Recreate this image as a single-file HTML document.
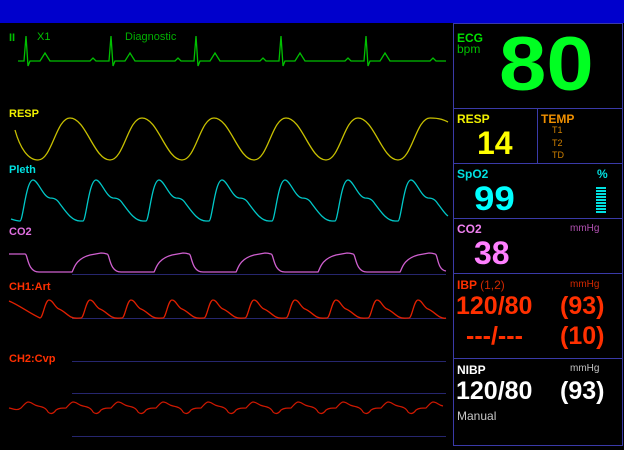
<!DOCTYPE html>
<html><head><meta charset="utf-8"><style>
*{margin:0;padding:0;box-sizing:border-box}
body{width:624px;height:450px;background:#000;position:relative;overflow:hidden;font-family:"Liberation Sans",sans-serif}
.t{position:absolute;white-space:nowrap;line-height:1}
.b{font-weight:bold}
.box{position:absolute;border:1px solid #3a3aa8}
</style></head><body>
<div style="position:absolute;left:0;top:0;width:624px;height:23px;background:#0000cc"></div>

<svg width="624" height="450" style="position:absolute;left:0;top:0" fill="none">
<g stroke="#26266e" stroke-width="1">
<line x1="72" y1="274.5" x2="446" y2="274.5"/>
<line x1="72" y1="318.5" x2="446" y2="318.5"/>
<line x1="72" y1="361.5" x2="446" y2="361.5"/>
<line x1="72" y1="393.5" x2="446" y2="393.5"/>
<line x1="72" y1="436.5" x2="446" y2="436.5"/>
</g>
<path stroke="#00c000" stroke-width="1.3" d="M18,61 h6 l2,-25 l2,30 l2,-5 h10 l5,-8 l5,8 h40 l3,-3 l3,3 h13 l2,-25 l2,30 l2,-5 h10 l5,-8 l5,8 h40 l3,-3 l3,3 h13 l2,-25 l2,30 l2,-5 h10 l5,-8 l5,8 h40 l3,-3 l3,3 h13 l2,-25 l2,30 l2,-5 h10 l5,-8 l5,8 h40 l3,-3 l3,3 h13 l2,-25 l2,30 l2,-5 h10 l5,-8 l5,8 h40 l3,-3 l3,3 h10"/>
<path stroke="#c8c000" stroke-width="1.3" d="M15,130 C20,148 28,160 38,160 C52,160 56,118 70,118 C86,118 94,160 110,160 C124,160 128,118 142,118 C158,118 166,160 182,160 C196,160 200,118 214,118 C230,118 238,160 254,160 C268,160 272,118 286,118 C302,118 310,160 326,160 C340,160 344,118 358,118 C374,118 382,160 398,160 C412,160 416,118 430,118 C440,118 444,120 448,122"/>
<path stroke="#00c8c8" stroke-width="1.3" d="M11,219 c3,1 6,2 9,2 c3,0 6,-41 13,-41 c5,0 10,17 17,18 c6,0 8,3 10,6 c6,8 12,17 20,17 h3 c3,0 6,-41 13,-41 c5,0 10,17 17,18 c6,0 8,3 10,6 c6,8 12,17 20,17 h3 c3,0 6,-41 13,-41 c5,0 10,17 17,18 c6,0 8,3 10,6 c6,8 12,17 20,17 h3 c3,0 6,-41 13,-41 c5,0 10,17 17,18 c6,0 8,3 10,6 c6,8 12,17 20,17 h3 c3,0 6,-41 13,-41 c5,0 10,17 17,18 c6,0 8,3 10,6 c6,8 12,17 20,17 h3 c3,0 6,-41 13,-41 c5,0 10,17 17,18 c6,0 8,3 10,6 c6,8 12,17 20,17 h3 c3,0 6,-41 13,-41 c5,0 10,17 17,18 c6,0 8,3 10,6 c4,5 7,10 10,12"/>
<path stroke="#d060d0" stroke-width="1.3" d="M9,254 H25 c3,0 2,18 14,18 h33 c2,-3 3,-13 18,-17 l11,-2 c2,0 3,0 6,1 c3,0 2,18 14,18 h33 c2,-3 3,-13 18,-17 l11,-2 c2,0 3,0 6,1 c3,0 2,18 14,18 h33 c2,-3 3,-13 18,-17 l11,-2 c2,0 3,0 6,1 c3,0 2,18 14,18 h33 c2,-3 3,-13 18,-17 l11,-2 c2,0 3,0 6,1 c3,0 2,18 14,18 h33 c2,-3 3,-13 18,-17 l11,-2 c2,0 3,0 6,1 c3,0 2,16 11,17"/>
<path stroke="#e02000" stroke-width="1.3" d="M9,301 c10,4 20,12 31,17 c3,0 5,-18 9,-18 c4,0 6,8 10,9 c5,2 8,6 12,8 c4,2 6,1 10,1 c3,0 5,-18 9,-18 c4,0 6,8 10,9 c5,2 8,6 12,8 c4,2 6,1 10,1 c3,0 5,-18 9,-18 c4,0 6,8 10,9 c5,2 8,6 12,8 c4,2 6,1 10,1 c3,0 5,-18 9,-18 c4,0 6,8 10,9 c5,2 8,6 12,8 c4,2 6,1 10,1 c3,0 5,-18 9,-18 c4,0 6,8 10,9 c5,2 8,6 12,8 c4,2 6,1 10,1 c3,0 5,-18 9,-18 c4,0 6,8 10,9 c5,2 8,6 12,8 c4,2 6,1 10,1 c3,0 5,-18 9,-18 c4,0 6,8 10,9 c5,2 8,6 12,8 c4,2 6,1 10,1 c3,0 5,-18 9,-18 c4,0 6,8 10,9 c5,2 8,6 12,8 c4,2 6,1 10,1 c3,0 5,-18 9,-18 c4,0 6,8 10,9 c5,2 8,6 12,8 c4,2 6,1 10,1 c3,0 5,-18 9,-18 c4,0 6,8 10,9 c5,2 8,6 12,8 c4,2 6,1 6,1"/>
<path stroke="#d01800" stroke-width="1.2" d="M9,408 c5,1 8,3 12,0 c3,-3 5,-6 7,-6 c4,0 5,3 10,4 c5,1 8,2 10,6 c3,3 6,1 8,-2 c3,-2 6,-2 10,-2 c3,-3 5,-6 7,-6 c4,0 5,3 10,4 c5,1 8,2 10,6 c3,3 6,1 8,-2 c3,-2 6,-2 10,-2 c3,-3 5,-6 7,-6 c4,0 5,3 10,4 c5,1 8,2 10,6 c3,3 6,1 8,-2 c3,-2 6,-2 10,-2 c3,-3 5,-6 7,-6 c4,0 5,3 10,4 c5,1 8,2 10,6 c3,3 6,1 8,-2 c3,-2 6,-2 10,-2 c3,-3 5,-6 7,-6 c4,0 5,3 10,4 c5,1 8,2 10,6 c3,3 6,1 8,-2 c3,-2 6,-2 10,-2 c3,-3 5,-6 7,-6 c4,0 5,3 10,4 c5,1 8,2 10,6 c3,3 6,1 8,-2 c3,-2 6,-2 10,-2 c3,-3 5,-6 7,-6 c4,0 5,3 10,4 c5,1 8,2 10,6 c3,3 6,1 8,-2 c3,-2 6,-2 10,-2 c3,-3 5,-6 7,-6 c4,0 5,3 10,4 c5,1 8,2 10,6 c3,3 6,1 8,-2 c3,-2 6,-2 10,-2 c3,-3 5,-6 7,-6 c4,0 5,3 10,4 c5,1 8,2 10,6 c3,3 6,1 8,-2 c3,-2 6,-2 10,-2 c3,-3 5,-6 7,-6 c4,0 5,3 10,4"/>
</svg>

<div class="t b" style="left:9px;top:33px;font-size:11px;color:#00c000">II</div>
<div class="t" style="left:37px;top:32px;font-size:11px;color:#00c000">X1</div>
<div class="t" style="left:125px;top:32px;font-size:11px;color:#00b000">Diagnostic</div>
<div class="t b" style="left:9px;top:109px;font-size:11px;color:#f0f000">RESP</div>
<div class="t b" style="left:9px;top:165px;font-size:11px;color:#00e0e0">Pleth</div>
<div class="t b" style="left:9px;top:227px;font-size:11px;color:#e070e0">CO2</div>
<div class="t b" style="left:9px;top:282px;font-size:11px;color:#ff3000">CH1:Art</div>
<div class="t b" style="left:9px;top:354px;font-size:11px;color:#ff3000">CH2:Cvp</div>

<div class="box" style="left:453px;top:23px;width:170px;height:423px"></div>
<div class="box" style="left:453px;top:108px;width:170px;height:1px;border-width:1px 0 0 0"></div>
<div class="box" style="left:537px;top:108px;width:1px;height:55px;border-width:0 0 0 1px"></div>
<div class="box" style="left:453px;top:163px;width:170px;height:1px;border-width:1px 0 0 0"></div>
<div class="box" style="left:453px;top:218px;width:170px;height:1px;border-width:1px 0 0 0"></div>
<div class="box" style="left:453px;top:273px;width:170px;height:1px;border-width:1px 0 0 0"></div>
<div class="box" style="left:453px;top:358px;width:170px;height:1px;border-width:1px 0 0 0"></div>

<div class="t b" style="left:457px;top:32px;font-size:12px;color:#00e000">ECG</div>
<div class="t" style="left:457px;top:43px;font-size:12px;color:#00c000">bpm</div>
<div class="t b" style="left:499px;top:27px;font-size:76px;color:#00ff22;transform:scaleX(1.12);transform-origin:left top">80</div>

<div class="t b" style="left:457px;top:113px;font-size:12px;color:#f0f000">RESP</div>
<div class="t b" style="left:477px;top:127px;font-size:32px;color:#ffff00">14</div>
<div class="t b" style="left:541px;top:113px;font-size:12px;color:#f09000">TEMP</div>
<div class="t" style="left:552px;top:126px;font-size:9px;color:#d08000">T1</div>
<div class="t" style="left:552px;top:139px;font-size:9px;color:#d08000">T2</div>
<div class="t" style="left:552px;top:151px;font-size:9px;color:#d08000">TD</div>

<div class="t b" style="left:457px;top:168px;font-size:12px;color:#00e0e0">SpO2</div>
<div class="t b" style="left:597px;top:168px;font-size:12px;color:#00e0e0">%</div>
<div class="t b" style="left:474px;top:182px;font-size:34px;color:#00ffff;transform:scaleX(1.08);transform-origin:left top">99</div>
<svg width="12" height="28" style="position:absolute;left:596px;top:186px">
<g fill="#00e0e0"><rect x="0" y="1" width="10" height="2"/><rect x="0" y="4" width="10" height="2"/><rect x="0" y="7" width="10" height="2"/><rect x="0" y="10" width="10" height="2"/><rect x="0" y="13" width="10" height="2"/><rect x="0" y="16" width="10" height="2"/><rect x="0" y="19" width="10" height="2"/><rect x="0" y="22" width="10" height="2"/><rect x="0" y="25" width="10" height="2"/></g></svg>

<div class="t b" style="left:457px;top:223px;font-size:12px;color:#f080f0">CO2</div>
<div class="t" style="left:570px;top:224px;font-size:10px;color:#b050b0">mmHg</div>
<div class="t b" style="left:474px;top:237px;font-size:32px;color:#ff80ff">38</div>

<div class="t b" style="left:457px;top:279px;font-size:12px;color:#ff3000">IBP <span style="font-weight:normal;color:#d02800">(1,2)</span></div>
<div class="t" style="left:570px;top:280px;font-size:10px;color:#d02800">mmHg</div>
<div class="t b" style="left:456px;top:294px;font-size:25px;color:#ff3000">120/80</div>
<div class="t b" style="left:560px;top:294px;font-size:25px;color:#ff3000">(93)</div>
<div class="t b" style="left:466px;top:324px;font-size:25px;color:#ff3000">---/---</div>
<div class="t b" style="left:560px;top:324px;font-size:25px;color:#ff3000">(10)</div>

<div class="t b" style="left:457px;top:364px;font-size:12px;color:#ffffff">NIBP</div>
<div class="t" style="left:570px;top:364px;font-size:10px;color:#c0c0c0">mmHg</div>
<div class="t b" style="left:456px;top:379px;font-size:25px;color:#ffffff">120/80</div>
<div class="t b" style="left:560px;top:379px;font-size:25px;color:#ffffff">(93)</div>
<div class="t" style="left:457px;top:410px;font-size:12px;color:#c8c8c8">Manual</div>
</body></html>
